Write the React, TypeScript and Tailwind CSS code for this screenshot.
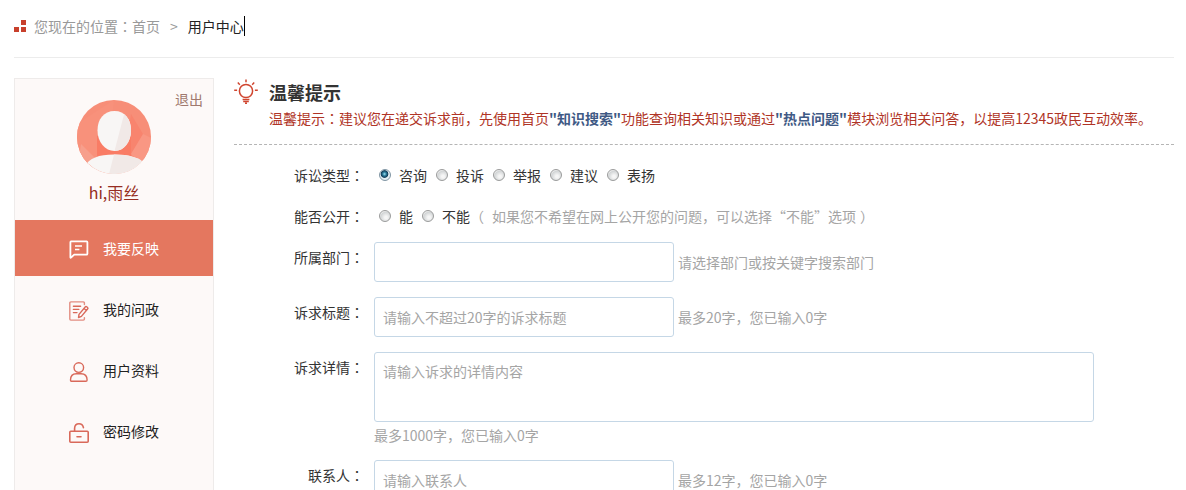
import type { ReactNode } from "react";

const pageFont = "font-['Noto_Sans_CJK_SC','Noto_Sans',sans-serif]";

function Colon() {
  return <span className="font-['Noto_Sans_CJK_TC',sans-serif]">：</span>;
}

function MessageIcon() {
  return (
    <svg width="20" height="20" viewBox="0 0 20 20" fill="none" stroke="currentColor" strokeWidth="1.8" strokeLinejoin="round" aria-hidden="true">
      <path d="M2 1.400h15.600q.8 0 .8.800v11.600q0 .8-.8.800H5.200L2 17.600Q1.400 18 1.400 17.200V2.200q0-.8.600-.8Z" />
      <path d="M6 6h7M6 9.600h4.400" strokeWidth="1.500" />
    </svg>
  );
}

function NoteIcon() {
  return (
    <svg width="20" height="20" viewBox="0 0 20 20" fill="none" stroke="currentColor" strokeWidth="1.4" strokeLinejoin="round" strokeLinecap="round" aria-hidden="true">
      <path d="M15.4 3.6V2q0-1.1-1.1-1.1H1.900Q.8.900.8 2v16q0 1.100 1.100 1.100h12.400q1.100 0 1.100-1.100v-1.400" opacity=".75" />
      <path d="M4.400 5.200h7.200M4.400 8.400h5.400M4.400 11.600h3.600" />
      <path d="m10 13.400 6.200-7.400q.7-.8 1.500-.2l.8.700q.8.700.1 1.500l-6.200 7.400-2.900 1.200.5-3.200ZM15 7.500l2.400 2" />
    </svg>
  );
}

function PersonIcon() {
  return (
    <svg width="20" height="20" viewBox="0 0 20 20" fill="none" stroke="currentColor" strokeWidth="1.400" strokeLinejoin="round" aria-hidden="true">
      <circle cx="9.800" cy="5.600" r="4.800" />
      <path d="M1.500 18q0-6.300 5.800-6.300h4.800q6 0 6 6.300 0 1.200-1.200 1.200H2.700q-1.200 0-1.200-1.200Z" />
    </svg>
  );
}

function LockIcon() {
  return (
    <svg width="20" height="20" viewBox="0 0 20 20" fill="none" stroke="currentColor" strokeWidth="1.600" strokeLinejoin="round" strokeLinecap="round" aria-hidden="true">
      <rect x=".8" y="8.200" width="18.400" height="11" rx="1" />
      <path d="M5.600 8V5.200Q5.800.800 10 .8q3.600 0 4.400 3.600v.4M8 13.700h4" />
    </svg>
  );
}

function BulbIcon() {
  return (
    <svg className="mt-px shrink-0" width="24" height="25" viewBox="0 0 24 25" fill="none" stroke="#d0452f" strokeWidth="1.500" aria-hidden="true">
      <circle cx="12" cy="12" r="6.600" />
      <path d="M12 .5v2.800M3.800 3.600l2 2.100M20.200 3.600l-2 2.100M.2 11.200h2.900M20.900 11.200h2.900" />
      <path d="M8.600 20.600h6.800M9.200 22.500h5.600M11 24.200h2" />
    </svg>
  );
}

function Avatar() {
  return (
    <svg className="mx-auto block" width="74" height="74" viewBox="0 0 74 74" role="img" aria-label="头像">
      <clipPath id="disc">
        <circle cx="37" cy="37" r="37" />
      </clipPath>
      <g clipPath="url(#disc)">
        <rect width="74" height="74" fill="#f78e78" />
        <path d="M0 24 37 0 30 62 0 74Z" fill="#f8917b" />
        <path d="M4 44 20 60 0 70Z" fill="#f79f8c" />
        <path d="m54 14 12 20-8 32-10-14Z" fill="#f8846e" />
        <path d="m66 34 8 4v20L60 62l-6-8Z" fill="#f99783" />
        <path d="M20 36h34v22H20Z" fill="#f97c65" />
        <path d="M8 66Q14 54.500 37 54.500T68 64L60 74H14Z" fill="#f8f6f5" />
        <path d="M37 54.500Q60 54.500 68 64L60 74H32Z" fill="#f1e9e7" />
        <path d="M37.500 11C48 11 54 19 54 30.500S47 51 37.500 51 20.500 42 20.500 30.500 27 11 37.500 11Z" fill="#f8f6f5" />
        <path d="M47 14.500c4.500 3.300 7 9 7 16C54 42 47 51 37.500 51Z" fill="#f1e9e7" />
      </g>
    </svg>
  );
}

const menu: { label: string; icon: ReactNode; active?: boolean }[] = [
  { label: "我要反映", icon: <MessageIcon />, active: true },
  { label: "我的问政", icon: <NoteIcon /> },
  { label: "用户资料", icon: <PersonIcon /> },
  { label: "密码修改", icon: <LockIcon /> },
];

const radioClass =
  "size-3 shrink-0 appearance-none rounded-full border border-[#9a9b9b] bg-[radial-gradient(circle_at_60%_65%,#f6f6f6_15%,#d2d5d6_60%,#f4f4f4_75%)] checked:border-[#7f95a3] checked:bg-[radial-gradient(circle_at_45%_40%,#9fe3f5_0,#2c7d9c_22%,#123c58_42%,#e4eff4_52%)]";

const fieldClass =
  "rounded-[3px] border border-[#c5d7e6] bg-white px-2 text-sm text-[#333] outline-none placeholder:text-[#a5a5a5]";

function Radio({ name, label, checked }: { name: string; label: string; checked?: boolean }) {
  return (
    <label className="flex items-center gap-2">
      <input type="radio" name={name} defaultChecked={checked} className={radioClass} />
      {label}
    </label>
  );
}

function RadioRow({ title, children }: { title: string; children: ReactNode }) {
  return (
    <fieldset className="mb-[11px]">
      <div className="flex h-[30px] items-center">
        <legend className="mr-[15px] w-[130px] shrink-0 text-right">
          {title}
          <Colon />
        </legend>
        {children}
      </div>
    </fieldset>
  );
}

function FieldRow({ id, title, children }: { id: string; title: string; children: ReactNode }) {
  return (
    <div className="mb-[15px] flex items-start">
      <label htmlFor={id} className="mr-[10px] w-[130px] shrink-0 text-right leading-[30px]">
        {title}
        <Colon />
      </label>
      {children}
    </div>
  );
}

function TextField({ id, placeholder, hint }: { id: string; placeholder?: string; hint: string }) {
  return (
    <div className="flex items-center gap-1">
      <input id={id} type="text" placeholder={placeholder} className={`h-10 w-[300px] ${fieldClass}`} />
      <span className="text-[#a5a5a5]">{hint}</span>
    </div>
  );
}

export default function App() {
  return (
    <div className={`flex h-screen flex-col overflow-hidden bg-white pr-3 pl-[14px] text-sm text-[#333] ${pageFont}`}>
      <nav aria-label="当前位置" className="flex h-[58px] shrink-0 items-center border-b border-[#ececec] pb-[5px] text-[#999]">
        <svg className="mr-2" width="12" height="12" viewBox="0 0 12 12" fill="#c8402c" aria-hidden="true">
          <path d="M7 0h5v5H7ZM0 7h5v5H0ZM7 7h5v5H7Z" />
        </svg>
        <span>
          您现在的位置
          <Colon />
        </span>
        <a href="#home">首页</a>
        <span className="mx-[10px]">&gt;</span>
        <span className="border-r border-black text-[#222]">用户中心</span>
      </nav>

      <div className="mt-5 flex flex-1 items-stretch gap-5">
        <aside className="w-[200px] shrink-0 border border-[#eeebea] bg-[#fdf9f8]">
          <div className="relative h-[141px] pt-[21px]">
            <a href="#logout" className="absolute top-[10px] right-[10px] text-[#a0796f]">
              退出
            </a>
            <Avatar />
            <p className="mt-[6px] text-center text-base leading-6 text-[#962d22]">hi,雨丝</p>
          </div>
          <ul className="flex flex-col gap-[5px]">
            {menu.map((item) => (
              <li key={item.label}>
                <a
                  href="#menu"
                  className={
                    item.active
                      ? "flex h-14 items-center gap-[14px] bg-[#e4775f] pl-[54px] text-white"
                      : "flex h-14 items-center gap-[14px] pl-[54px] text-[#222]"
                  }
                >
                  <span className={item.active ? "pt-[3px] text-white" : "pt-[3px] text-[#d9695a]"}>{item.icon}</span>
                  {item.label}
                </a>
              </li>
            ))}
          </ul>
        </aside>

        <main className="min-w-0 flex-1">
          <header className="flex h-[67px] gap-[11px] border-b border-dashed border-[#b5b5b5]">
            <BulbIcon />
            <div className="pt-px">
              <h1 className="text-lg leading-[26px] font-bold">温馨提示</h1>
              <p className="leading-[26px] text-[#b03426]">
                温馨提示
                <Colon />
                建议您在递交诉求前，先使用首页
                <a href="#search" className="font-bold text-[#3f5a85]">"知识搜索"</a>
                功能查询相关知识或通过
                <a href="#hot" className="font-bold text-[#3f5a85]">"热点问题"</a>
                模块浏览相关问答，以提高12345政民互动效率。
              </p>
            </div>
          </header>

          <form className="pt-[15px]">
            <RadioRow title="诉讼类型">
              <div className="flex gap-[9px]">
                <Radio name="kind" label="咨询" checked />
                <Radio name="kind" label="投诉" />
                <Radio name="kind" label="举报" />
                <Radio name="kind" label="建议" />
                <Radio name="kind" label="表扬" />
              </div>
            </RadioRow>
            <RadioRow title="能否公开">
              <div className="flex gap-[9px]">
                <Radio name="open" label="能" />
                <Radio name="open" label="不能" />
              </div>
              <span className="text-[#a5a5a5]">
                （<span className="pr-1 pl-2">如果您不希望在网上公开您的问题，可以选择“不能”选项</span>）
              </span>
            </RadioRow>
            <FieldRow id="dept" title="所属部门">
              <TextField id="dept" hint="请选择部门或按关键字搜索部门" />
            </FieldRow>
            <FieldRow id="subject" title="诉求标题">
              <TextField id="subject" placeholder="请输入不超过20字的诉求标题" hint="最多20字，您已输入0字" />
            </FieldRow>
            <FieldRow id="detail" title="诉求详情">
              <div className="max-w-[720px] min-w-0 flex-1">
                <textarea
                  id="detail"
                  placeholder="请输入诉求的详情内容"
                  className={`block h-[70px] w-full resize-none py-2 ${fieldClass}`}
                />
                <p className="mt-[3px] leading-5 text-[#a5a5a5]">最多1000字，您已输入0字</p>
              </div>
            </FieldRow>
            <FieldRow id="contact" title="联系人">
              <TextField id="contact" placeholder="请输入联系人" hint="最多12字，您已输入0字" />
            </FieldRow>
          </form>
        </main>
      </div>
    </div>
  );
}
